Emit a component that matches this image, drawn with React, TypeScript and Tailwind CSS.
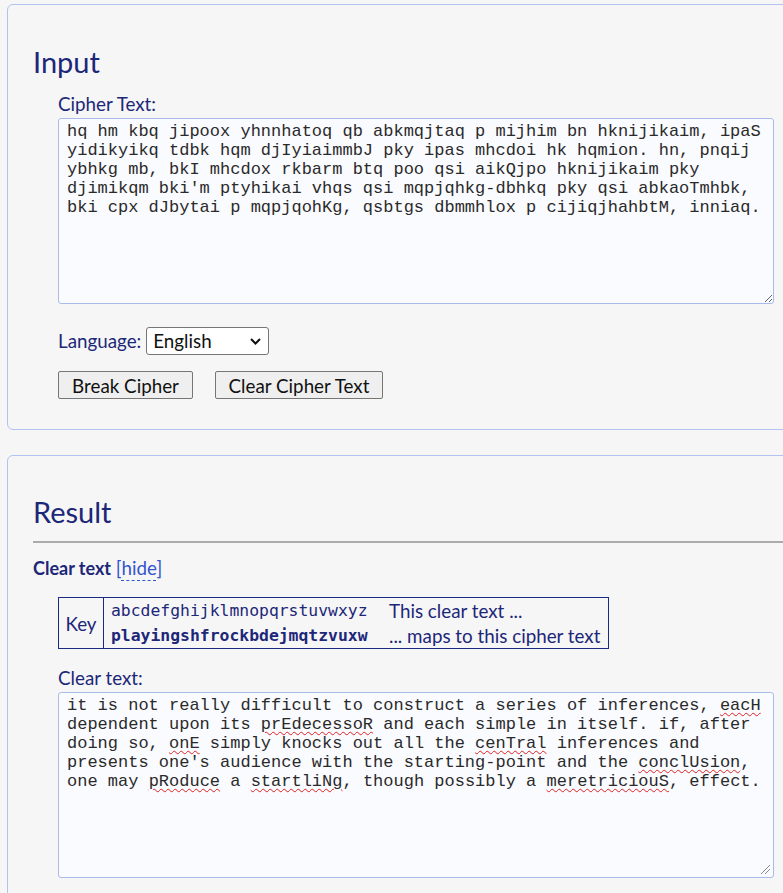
import React from "react";

const cipher =
  "hq hm kbq jipoox yhnnhatoq qb abkmqjtaq p mijhim bn hknijikaim, ipaS yidikyikq tdbk hqm djIyiaimmbJ pky ipas mhcdoi hk hqmion. hn, pnqij ybhkg mb, bkI mhcdox rkbarm btq poo qsi aikQjpo hknijikaim pky djimikqm bki'm ptyhikai vhqs qsi mqpjqhkg-dbhkq pky qsi abkaoTmhbk, bki cpx dJbytai p mqpjqohKg, qsbtgs dbmmhlox p cijiqjhahbtM, inniaq.";

const clearParts: [string, boolean][] = [
  ["it is not really difficult to construct a series of inferences, ", false],
  ["eacH", true],
  [" dependent upon its ", false],
  ["prEdecessoR", true],
  [" and each simple in itself. if, after doing so, ", false],
  ["onE", true],
  [" simply knocks out all the ", false],
  ["cenTral", true],
  [" inferences and presents one's audience with the starting-point and the ", false],
  ["conclUsion", true],
  [", one may ", false],
  ["pRoduce", true],
  [" a ", false],
  ["startliNg", true],
  [", though possibly a ", false],
  ["meretriciouS", true],
  [", effect.", false],
];

function Grip() {
  return (
    <svg
      className="absolute bottom-[2px] right-[2px]"
      width="11"
      height="11"
      viewBox="0 0 11 11"
    >
      <path d="M10 1 L1 10 M10 5 L5 10" stroke="#8a8a8a" strokeWidth="1" />
    </svg>
  );
}

export default function App() {
  return (
    <div className="min-h-[893px] overflow-hidden bg-[#f6f6f7] pl-[7px] pt-[4px] font-['Lato',_sans-serif] text-[18.8px] text-[#1c2777]">
      <section className="h-[426px] w-[820px] rounded-[6px] border border-[#b3c3ef] pl-[25px] pt-[40px]">
        <h2 className="text-[29px] leading-[34px]">Input</h2>
        <div className="ml-[25px]">
          <label className="mt-[14px] block leading-[22px]">Cipher Text:</label>
          <textarea
            readOnly
            spellCheck={false}
            defaultValue={cipher}
            className="mt-[3px] block h-[186px] w-[716px] rounded-[3px] border border-[#aabbe9] bg-[#fafbff] px-[8px] pt-[3px] font-['Liberation_Mono',_monospace] text-[17px] leading-[19px] text-[#2a2a2a] outline-none"
          />
          <div className="mt-[23px] flex h-[28px] items-center gap-[5px]">
            <span className="leading-[22px]">Language:</span>
            <div className="relative h-[28px] w-[123px]">
              <select className="h-[28px] w-[123px] appearance-none rounded-[3px] border border-[#767676] bg-white pl-[6px] text-[18.8px] leading-[22px] text-[#111] outline-none">
                <option>English</option>
              </select>
              <svg
                className="pointer-events-none absolute right-[8px] top-[11px]"
                width="11"
                height="7"
                viewBox="0 0 11 7"
              >
                <path d="M1 1 L5.5 5.5 L10 1" fill="none" stroke="#111" strokeWidth="2" />
              </svg>
            </div>
          </div>
          <div className="mt-[16px] flex gap-[22px]">
            <button className="h-[28px] w-[135px] rounded-[2px] border border-[#767676] bg-[#efefef] text-[18.8px] text-[#111]">
              Break Cipher
            </button>
            <button className="h-[28px] w-[168px] rounded-[2px] border border-[#767676] bg-[#efefef] text-[18.8px] text-[#111]">
              Clear Cipher Text
            </button>
          </div>
        </div>
      </section>

      <section className="mt-[25px] h-[500px] w-[820px] rounded-[6px] border border-[#b3c3ef] pl-[25px] pt-[39px]">
        <h2 className="text-[29px] leading-[34px]">Result</h2>
        <div className="mt-[12px] h-[2px] bg-[#ababab]" />
        <div className="mt-[14px] leading-[22px]">
          <span className="text-[18px] font-bold">Clear text</span>{" "}
          <span className="text-[#3355cc]">
            [<span className="underline decoration-dashed decoration-1 underline-offset-[5px]">hide</span>]
          </span>
        </div>
        <div className="ml-[25px] mt-[18px] flex w-[551px] border border-[#1a2a80] leading-[25px]">
          <div className="flex w-[45px] items-center justify-center border-r border-[#1a2a80]">Key</div>
          <div className="w-[278px] pl-[7px] font-['DejaVu_Sans_Mono',_monospace] text-[16.4px]">
            <div>abcdefghijklmnopqrstuvwxyz</div>
            <div className="font-bold">playingshfrockbdejmqtzvuxw</div>
          </div>
          <div className="w-[226px] pl-[7px]">
            <div>This clear text ...</div>
            <div>... maps to this cipher text</div>
          </div>
        </div>
        <div className="ml-[25px]">
          <label className="mt-[18px] block leading-[22px]">Clear text:</label>
          <div className="relative mt-[3px] h-[186px] w-[716px] rounded-[3px] border border-[#aabbe9] bg-[#fafbff] px-[8px] pt-[3px] font-['Liberation_Mono',_monospace] text-[17px] leading-[19px] whitespace-pre-wrap text-[#2a2a2a]">
            {clearParts.map(([t, bad], i) =>
              bad ? (
                <span
                  key={i}
                  className="underline decoration-[#e02020] decoration-wavy decoration-1 underline-offset-[2px]"
                >
                  {t}
                </span>
              ) : (
                <span key={i}>{t}</span>
              )
            )}
            <Grip />
          </div>
        </div>
      </section>
    </div>
  );
}
